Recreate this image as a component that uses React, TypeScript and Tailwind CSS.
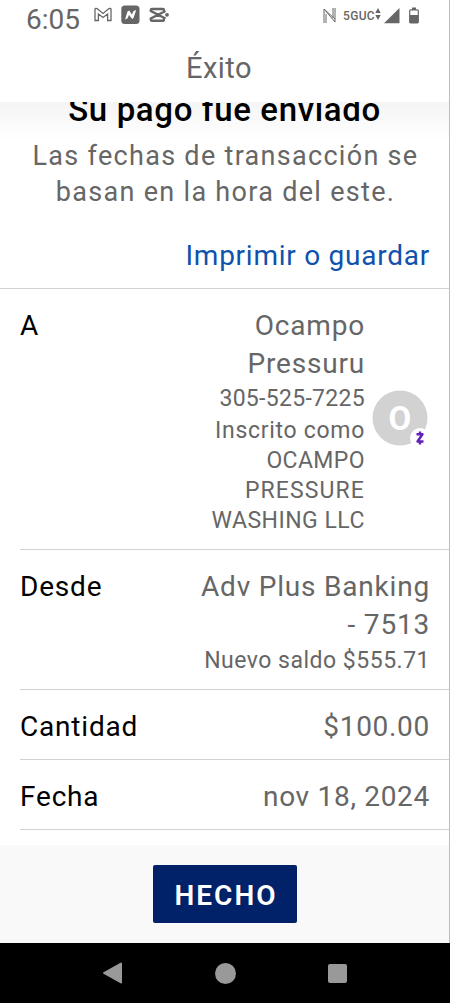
import type { ReactNode } from "react"

function StatusBar() {
  return (
    <div className="flex h-8 items-start text-[#666666]">
      <span className="ml-[26px] mt-[4px] text-[28px] leading-8">6:05</span>

      {/* Notifications */}
      <div className="ml-[14px] mt-[5px] flex items-center gap-[9px]">
        <svg width="18" height="20" viewBox="0 0 18 20" fill="none" stroke="currentColor" strokeWidth="1.3">
          <path d="M1 15.500V4Q1.500 2.800 3 3.600L9 8.400L15 3.600Q16.500 2.800 17 4V15.500H13.600V9L9 12.400L4.400 9V15.500Z" />
        </svg>
        <svg width="19" height="20" viewBox="0 0 19 20">
          <rect x="0.3" y="0.6" width="18.2" height="18.4" rx="3.5" fill="currentColor" />
          <path d="M4 14.5L6.5 6.5L8.2 5.6L11 9.5L12.5 6L15.2 5L12.5 13L11.2 14L8 10L6.4 13.6Z" fill="#fff" />
        </svg>
        <svg width="21" height="20" viewBox="0 0 21 20" fill="none" stroke="currentColor" strokeWidth="2.4">
          <path d="M15 6.500V5Q15 4 13.800 4H3Q1.800 4 1.800 5V6L16.500 13.500M16.500 6L1.800 13.500V14.500Q1.800 15.800 3 15.800H13.800Q15 15.800 15 14.500V13" />
          <circle cx="18" cy="9.800" r="1.900" fill="currentColor" stroke="none" />
        </svg>
      </div>

      {/* Connection and battery */}
      <div className="ml-auto mr-[30px] mt-[5px] flex items-center">
        <svg width="14" height="20" viewBox="0 0 14 20" fill="none" stroke="currentColor" strokeWidth="1">
          <path d="M1 17V3L12 16V2M3 17V8M1 3L12 13M10 12V2" />
        </svg>
        <span className="ml-[6px] text-[12px] font-medium leading-[22px] tracking-[0.3px]">5GUC</span>
        <svg width="6" height="20" viewBox="0 0 6 20" fill="currentColor">
          <path d="M0.300 7L3 2L5.700 7ZM0.300 9L3 14L5.700 9Z" />
        </svg>
        <svg className="ml-[3px]" width="16" height="20" viewBox="0 0 16 20" fill="currentColor">
          <path d="M0 17.300L15.500 2V17.300Z" />
        </svg>
        <svg className="ml-[9px]" width="10" height="20" viewBox="0 0 10 20" fill="currentColor">
          <path d="M3 1.500H7V4H3Z" />
          <rect x="0.700" y="3.800" width="8.600" height="13" rx="1" fill="none" stroke="currentColor" strokeWidth="1.200" />
          <path d="M0.700 9H9.300V17H0.700Z" />
        </svg>
      </div>
    </div>
  )
}

function Header() {
  return (
    <header className="relative z-10 h-[102px] shrink-0 bg-white">
      <StatusBar />
      <h1 className="mt-[18px] pr-[11px] text-center text-[29px] leading-9 tracking-[0.5px] text-[#666666]">
        Éxito
      </h1>
      {/* Soft shadow over the scrolled content */}
      <div className="absolute inset-x-0 top-full h-10 bg-linear-to-b from-black/4 to-transparent" />
    </header>
  )
}

function Row({ label, children }: { label: string; children: ReactNode }) {
  return (
    <div className="ml-5 flex justify-between border-b border-[#d2d2d2] pr-[19px] pt-[18px] text-[28px] leading-[38px]">
      <span className="tracking-[0.8px] text-black">{label}</span>
      {children}
    </div>
  )
}

function Avatar() {
  return (
    <svg className="ml-[7px] mt-[83px]" width="58" height="58" viewBox="0 0 58 58">
      <circle cx="28" cy="28" r="27.500" fill="#d2d2d2" />
      <text x="28" y="39.500" textAnchor="middle" fontSize="33" fontWeight="700" fill="#fff" fontFamily="Roboto">O</text>
      <circle cx="48" cy="48" r="10" fill="#fff" />
      <path d="M44.500 44.200H50.500L45.500 51.500H51.500M48 41.500V44.500M48 51.500V54.500" fill="none" stroke="#6420b8" strokeWidth="2.400" strokeLinejoin="round" />
    </svg>
  )
}

export default function App() {
  return (
    <div className="flex h-[1003px] w-[450px] flex-col overflow-hidden bg-white font-[Roboto,sans-serif]">
      <div className="flex min-h-0 flex-1 flex-col border-r border-[#bdbdbd]">
        <Header />

        <main className="min-h-0 flex-1">
          {/* The title is partly scrolled under the header */}
          <h2 className="-mt-[10px] text-center text-[33px] font-medium leading-9 tracking-[0.65px] text-black">
            Su pago fue enviado
          </h2>
          <p className="mt-[10px] pl-[2px] text-center text-[27px] leading-9 tracking-[1.3px] text-[#666666]">
            Las fechas de transacción se
            <br />
            basan en la hora del este.
          </p>
          <a href="#" className="mr-[19px] mt-[28px] block text-right text-[28px] leading-9 tracking-[0.75px] text-[#0f52ad]">
            Imprimir o guardar
          </a>
          <div className="mt-[14px] border-b border-[#d2d2d2]" />

          <Row label="A">
            <div className="flex text-[#666666]">
              <div className="mb-[13px] text-right text-[23px] leading-[30px] tracking-[0.7px]">
                <div className="text-[28px] leading-[38px] tracking-[0.8px]">Ocampo<br />Pressuru</div>
                <div className="mb-[2px] mt-px tracking-[0.3px]">305-525-7225</div>
                Inscrito como
                <div className="tracking-[0.4px]">OCAMPO</div>
                <div className="tracking-[1.1px]">PRESSURE</div>
                <div className="tracking-[0.5px]">WASHING LLC</div>
              </div>
              <Avatar />
            </div>
          </Row>
          <Row label="Desde">
            <div className="mb-[13px] text-right tracking-[0.8px] text-[#666666]">
              Adv Plus Banking
              <br />- 7513
              <div className="mt-[2px] text-[23px] leading-[30px] tracking-[0.5px]">Nuevo saldo $555.71</div>
            </div>
          </Row>
          <Row label="Cantidad">
            <span className="mb-[13px] tracking-[0.7px] text-[#666666]">$100.00</span>
          </Row>
          <Row label="Fecha">
            <span className="mb-[13px] tracking-[0.7px] text-[#666666]">nov 18, 2024</span>
          </Row>
        </main>

        <footer className="flex h-[98px] shrink-0 justify-center bg-[#f9f9f9] pt-5">
          <button className="h-[58px] w-[144px] rounded-[2px] bg-[#012169] pl-[3px] pt-[3px] text-[28px] font-semibold tracking-[2px] text-white">
            HECHO
          </button>
        </footer>
      </div>

      {/* Android navigation */}
      <nav className="flex h-[60px] shrink-0 items-center justify-between bg-black pl-[102px] pr-[103px]">
        <svg width="21" height="24" viewBox="0 0 21 24" fill="#999" stroke="#999" strokeWidth="2" strokeLinejoin="round">
          <path d="M2 12L19 2.500V21.500Z" />
        </svg>
        <div className="-ml-px size-[21px] rounded-full bg-[#999]" />
        <div className="size-[19px] rounded-[2px] bg-[#999]" />
      </nav>
    </div>
  )
}
